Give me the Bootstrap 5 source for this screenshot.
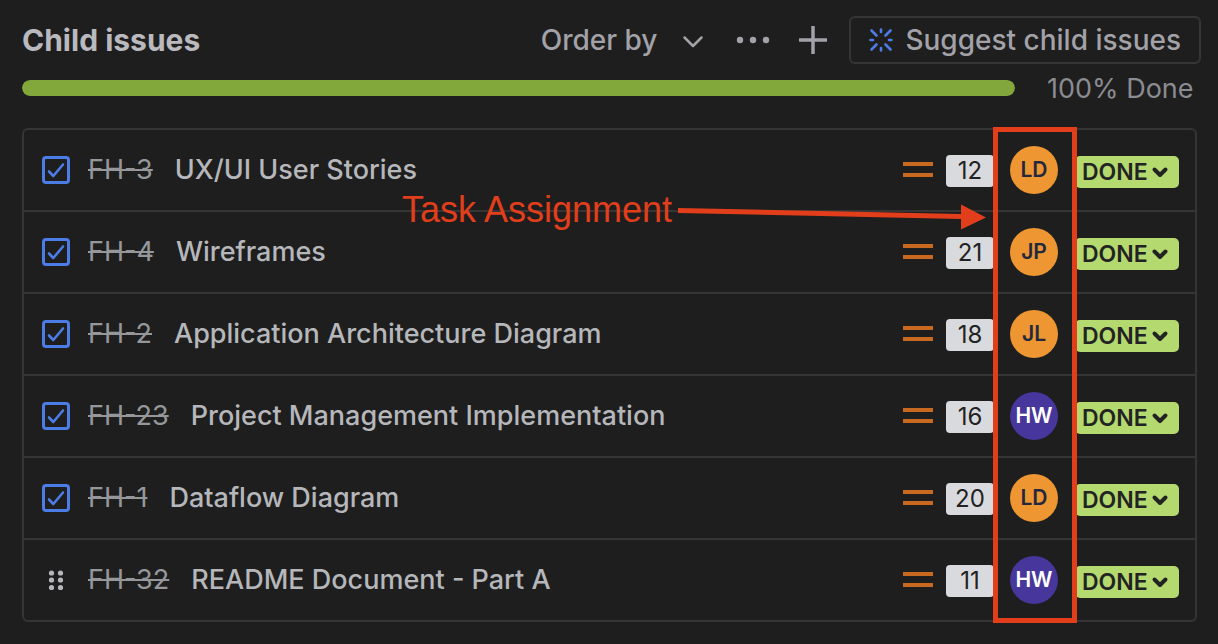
<!DOCTYPE html>
<html lang="en" data-bs-theme="dark">
<head>
<meta charset="utf-8">
<meta name="viewport" content="width=device-width, initial-scale=1">
<title>Child issues</title>
<link href="https://cdn.jsdelivr.net/npm/bootstrap@5.3.0/dist/css/bootstrap.min.css" rel="stylesheet">
<style>
  body { background: #1e1e1e; color: #b6b7bb; font-family: Inter, "Liberation Sans", sans-serif; font-size: 27px; line-height: 36px; }
  svg { display: block; flex: none; }
  .issues { padding: 16px 21px 22px 22px; }
  .heading { font-size: 30px; line-height: 40px; font-weight: 700; color: #b9b9be; }
  .toolbar { margin-right: -4px; gap: 22px; }
  .tool { --bs-btn-padding-x: 0; --bs-btn-padding-y: 0; --bs-btn-color: #a2a2a8; --bs-btn-font-size: 28px; --bs-btn-line-height: 36px; --bs-btn-font-weight: 500; --bs-btn-border-width: 0; }
  .order { gap: 24px; padding-right: 2px; }
  .suggest { --bs-btn-padding-x: 18px; --bs-btn-padding-y: 4px; --bs-btn-border-width: 2px; --bs-btn-border-color: #353535; --bs-btn-border-radius: 6px; height: 48px; }
  .progress { --bs-progress-height: 16px; --bs-progress-border-radius: 8px; --bs-progress-bar-bg: #82a83c; --bs-progress-bg: #353535; }
  .done-label { color: #8b8b92; line-height: 34px; min-width: 158px; margin-bottom: -2px; }
  .issue-list { --bs-list-group-bg: transparent; --bs-list-group-color: #b6b7bb; --bs-list-group-border-color: #353535; --bs-list-group-border-width: 2px; --bs-list-group-border-radius: 6px; --bs-list-group-item-padding-x: 18px; --bs-list-group-item-padding-y: 16px; }
  .issue-list .list-group-item { min-height: 82px; padding-right: 16px; }
  .issue-list .list-group-item:first-child { min-height: 84px; }
  .marker { width: 28px; height: 28px; margin: 0 18px 0 0; }
  .marker.form-check-input { border: 3px solid #4c7ce6; border-radius: 4px; background-color: transparent; background-size: 28px 28px; }
  .marker.form-check-input:checked { border-color: #4c7ce6; background-color: transparent; background-image: url("data:image/svg+xml,%3csvg xmlns='http://www.w3.org/2000/svg' viewBox='0 0 28 28'%3e%3cpath fill='none' stroke='%234c7ce6' stroke-width='2.600' stroke-linecap='round' stroke-linejoin='round' d='m7 15.500 4.300 4.500L21 8.500'/%3e%3c/svg%3e"); }
  .issue-key { color: #96979b; text-decoration: line-through 2px; margin-right: 22px; }
  .issue-title { font-weight: 450; }
  .points { width: 48px; height: 32px; margin: 2px 16px 0 13px; border-radius: 4px; background: #d9dade; color: #222; font-size: 24px; line-height: 32px; text-align: center; }
  .avatar { width: 48px; height: 48px; margin-right: 17px; font-size: 21px; line-height: 48px; font-weight: 600; text-align: center; }
  .avatar-orange { background: #ee9632; color: #24283f; }
  .avatar-violet { background: #47369b; color: #fff; }
  .status { --bs-btn-padding-x: 7px; --bs-btn-padding-y: 0; --bs-btn-border-width: 0; --bs-btn-bg: #b3d96f; --bs-btn-color: #232323; --bs-btn-hover-bg: #a6cf5d; --bs-btn-hover-color: #232323; --bs-btn-font-size: 23px; --bs-btn-line-height: 32px; --bs-btn-font-weight: 600; --bs-btn-border-radius: 5px; width: 104px; height: 32px; margin-top: 4px; }
  .callout-box { right: 120px; top: -1px; bottom: -1px; width: 84px; border: 5px solid #e23e1b; pointer-events: none; }
  .callout-note { right: 211px; top: 60px; color: #e23e1b; font-family: "Liberation Sans", sans-serif; font-size: 36px; line-height: 44px; pointer-events: none; gap: 6px; }
  .callout-note svg { margin-top: 14px; }
</style>
</head>
<body>
<main class="issues">
  <header class="d-flex align-items-center justify-content-between">
    <h1 class="heading m-0">Child issues</h1>
    <div class="toolbar d-flex align-items-center">
      <button class="btn tool order d-flex align-items-center" type="button">Order by
        <svg width="24" height="24" viewBox="0 0 24 24" fill="none" stroke="#a2a2a8" stroke-width="2.500" stroke-linecap="round" stroke-linejoin="round"><path d="m3.500 9.500 8.500 8.500 8.500-8.500"/></svg>
      </button>
      <button class="btn tool" type="button" aria-label="More actions">
        <svg width="48" height="32" viewBox="0 0 48 32" fill="#a2a2a8"><circle cx="11" cy="16" r="3.200"/><circle cx="24" cy="16" r="3.200"/><circle cx="37" cy="16" r="3.200"/></svg>
      </button>
      <button class="btn tool" type="button" aria-label="Add child issue">
        <svg width="28" height="28" viewBox="0 0 28 28" stroke="#a2a2a8" stroke-width="3.500"><path d="M14 0v28M0 14h28"/></svg>
      </button>
      <button class="btn tool suggest d-flex align-items-center" type="button">
        <svg width="24" height="24" viewBox="0 0 24 24" fill="none" stroke="#4c7ce6" stroke-width="2.600" stroke-linecap="round"><path d="M12 1.500v2.500M12 20v2.500M1.500 12H4M20 12h2.500M2.500 2.500l5 5M16.500 16.500l5 5M21.500 2.500l-5 5M7.500 16.500l-5 5"/></svg>
        <span class="ms-2 ps-1">Suggest child issues</span>
      </button>
    </div>
  </header>

  <div class="d-flex align-items-center mt-2">
    <div class="progress flex-grow-1" role="progressbar" aria-label="Child issues done" aria-valuenow="100" aria-valuemin="0" aria-valuemax="100">
      <div class="progress-bar rounded-pill" style="width:100%"></div>
    </div>
    <span class="done-label ms-4 ps-2">100% Done</span>
  </div>

  <section class="position-relative mt-4">
    <ul class="list-group issue-list">
      <li class="list-group-item d-flex align-items-center">
        <input class="form-check-input marker" type="checkbox" id="fh3" checked>
        <a class="issue-key" href="#fh3">FH-3</a><label for="fh3" class="issue-title flex-grow-1">UX/UI User Stories</label>
        <svg width="30" height="18" viewBox="0 0 30 18" fill="#c9691f"><path d="M0 1h30v4H0zM0 12h30v4H0z"/></svg>
        <span class="points">12</span><span class="avatar avatar-orange rounded-circle">LD</span>
        <button class="btn status d-flex align-items-center justify-content-between" type="button">DONE <svg width="24" height="24" viewBox="0 0 24 24" fill="none" stroke="#232323" stroke-width="4" stroke-linecap="round" stroke-linejoin="round"><path d="m6.500 9.500 5.500 5.500 5.500-5.500"/></svg></button>
      </li>
      <li class="list-group-item d-flex align-items-center">
        <input class="form-check-input marker" type="checkbox" id="fh4" checked>
        <a class="issue-key" href="#fh4">FH-4</a><label for="fh4" class="issue-title flex-grow-1">Wireframes</label>
        <svg width="30" height="18" viewBox="0 0 30 18" fill="#c9691f"><path d="M0 1h30v4H0zM0 12h30v4H0z"/></svg>
        <span class="points">21</span><span class="avatar avatar-orange rounded-circle">JP</span>
        <button class="btn status d-flex align-items-center justify-content-between" type="button">DONE <svg width="24" height="24" viewBox="0 0 24 24" fill="none" stroke="#232323" stroke-width="4" stroke-linecap="round" stroke-linejoin="round"><path d="m6.500 9.500 5.500 5.500 5.500-5.500"/></svg></button>
      </li>
      <li class="list-group-item d-flex align-items-center">
        <input class="form-check-input marker" type="checkbox" id="fh2" checked>
        <a class="issue-key" href="#fh2">FH-2</a><label for="fh2" class="issue-title flex-grow-1">Application Architecture Diagram</label>
        <svg width="30" height="18" viewBox="0 0 30 18" fill="#c9691f"><path d="M0 1h30v4H0zM0 12h30v4H0z"/></svg>
        <span class="points">18</span><span class="avatar avatar-orange rounded-circle">JL</span>
        <button class="btn status d-flex align-items-center justify-content-between" type="button">DONE <svg width="24" height="24" viewBox="0 0 24 24" fill="none" stroke="#232323" stroke-width="4" stroke-linecap="round" stroke-linejoin="round"><path d="m6.500 9.500 5.500 5.500 5.500-5.500"/></svg></button>
      </li>
      <li class="list-group-item d-flex align-items-center">
        <input class="form-check-input marker" type="checkbox" id="fh23" checked>
        <a class="issue-key" href="#fh23">FH-23</a><label for="fh23" class="issue-title flex-grow-1">Project Management Implementation</label>
        <svg width="30" height="18" viewBox="0 0 30 18" fill="#c9691f"><path d="M0 1h30v4H0zM0 12h30v4H0z"/></svg>
        <span class="points">16</span><span class="avatar avatar-violet rounded-circle">HW</span>
        <button class="btn status d-flex align-items-center justify-content-between" type="button">DONE <svg width="24" height="24" viewBox="0 0 24 24" fill="none" stroke="#232323" stroke-width="4" stroke-linecap="round" stroke-linejoin="round"><path d="m6.500 9.500 5.500 5.500 5.500-5.500"/></svg></button>
      </li>
      <li class="list-group-item d-flex align-items-center">
        <input class="form-check-input marker" type="checkbox" id="fh1" checked>
        <a class="issue-key" href="#fh1">FH-1</a><label for="fh1" class="issue-title flex-grow-1">Dataflow Diagram</label>
        <svg width="30" height="18" viewBox="0 0 30 18" fill="#c9691f"><path d="M0 1h30v4H0zM0 12h30v4H0z"/></svg>
        <span class="points">20</span><span class="avatar avatar-orange rounded-circle">LD</span>
        <button class="btn status d-flex align-items-center justify-content-between" type="button">DONE <svg width="24" height="24" viewBox="0 0 24 24" fill="none" stroke="#232323" stroke-width="4" stroke-linecap="round" stroke-linejoin="round"><path d="m6.500 9.500 5.500 5.500 5.500-5.500"/></svg></button>
      </li>
      <li class="list-group-item d-flex align-items-center" id="fh32">
        <svg class="marker" viewBox="0 0 28 28" fill="#b6b7bb"><circle cx="9.500" cy="7" r="2.600"/><circle cx="18.500" cy="7" r="2.600"/><circle cx="9.500" cy="14" r="2.600"/><circle cx="18.500" cy="14" r="2.600"/><circle cx="9.500" cy="21.500" r="2.600"/><circle cx="18.500" cy="21.500" r="2.600"/></svg>
        <a class="issue-key" href="#fh32">FH-32</a><span class="issue-title flex-grow-1">README Document - Part A</span>
        <svg width="30" height="18" viewBox="0 0 30 18" fill="#c9691f"><path d="M0 1h30v4H0zM0 12h30v4H0z"/></svg>
        <span class="points">11</span><span class="avatar avatar-violet rounded-circle">HW</span>
        <button class="btn status d-flex align-items-center justify-content-between" type="button">DONE <svg width="24" height="24" viewBox="0 0 24 24" fill="none" stroke="#232323" stroke-width="4" stroke-linecap="round" stroke-linejoin="round"><path d="m6.500 9.500 5.500 5.500 5.500-5.500"/></svg></button>
      </li>
    </ul>
    <div class="callout-box position-absolute"></div>
    <div class="callout-note position-absolute d-flex align-items-center">
      <span>Task Assignment</span>
      <svg width="308" height="26" viewBox="0 0 308 26" fill="#e23e1b"><path d="M0 4 283 10V0.500L308 13.500 283 25.500V15L0 9z"/></svg>
    </div>
  </section>
</main>
<script src="https://cdn.jsdelivr.net/npm/bootstrap@5.3.0/dist/js/bootstrap.bundle.min.js"></script>
</body>
</html>
